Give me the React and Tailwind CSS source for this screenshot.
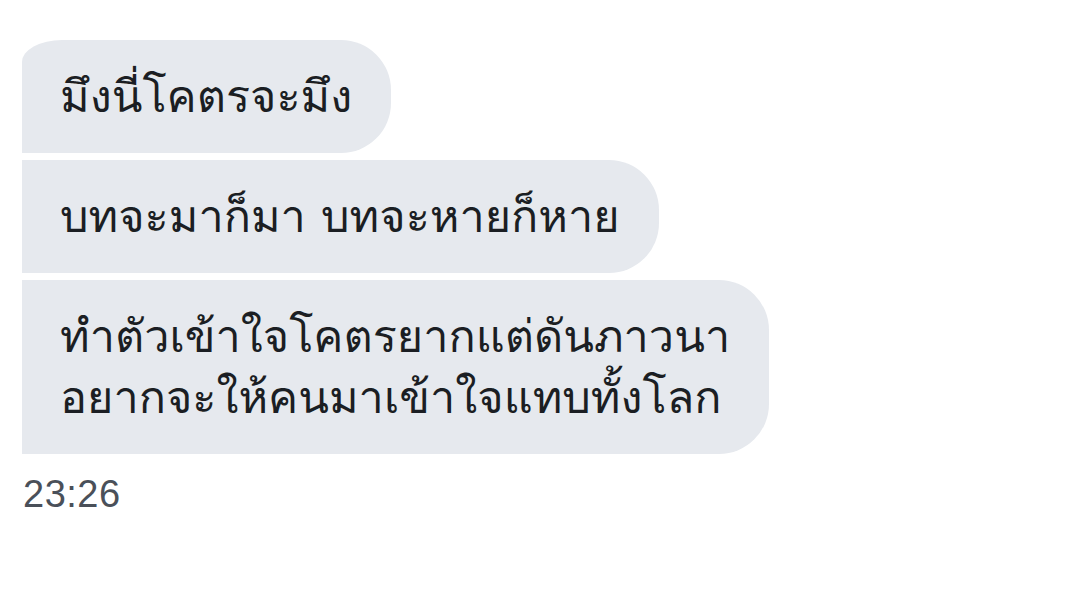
import React from 'react';

const messages = [
  { lines: ['มึงนี่โคตรจะมึง'], first: true },
  { lines: ['บทจะมาก็มา บทจะหายก็หาย'] },
  { lines: ['ทำตัวเข้าใจโคตรยากแต่ดันภาวนา', 'อยากจะให้คนมาเข้าใจแทบทั้งโลก'] },
];

const Bubble = ({ lines, first }) => (
  <div
    className={
      first
        ? 'self-start bg-[#e6e9ee] text-[#1b1e23] pl-[38px] pr-[39px] py-[26px] rounded-r-[50px] rounded-tl-[40px_22px]'
        : 'self-start bg-[#e6e9ee] text-[#1b1e23] pl-[38px] pr-[39px] py-[26px] rounded-r-[50px]'
    }
  >
    {lines.map((line) => (
      <div key={line} className="text-[45px] leading-[61px] whitespace-nowrap">
        {line}
      </div>
    ))}
  </div>
);

export default function App() {
  return (
    <div className="w-[1069px] h-[597px] bg-white pl-[22px] pt-[40px] flex flex-col gap-[7px] font-['Loma','Noto_Sans',sans-serif]">
      {messages.map((m, i) => (
        <Bubble key={i} {...m} />
      ))}
      <div className="mt-[11px] pl-[1px] text-[38px] leading-[44px] tracking-[0.5px] text-[#4a5059] font-['Liberation_Sans',Arial,sans-serif]">
        23:26
      </div>
    </div>
  );
}
